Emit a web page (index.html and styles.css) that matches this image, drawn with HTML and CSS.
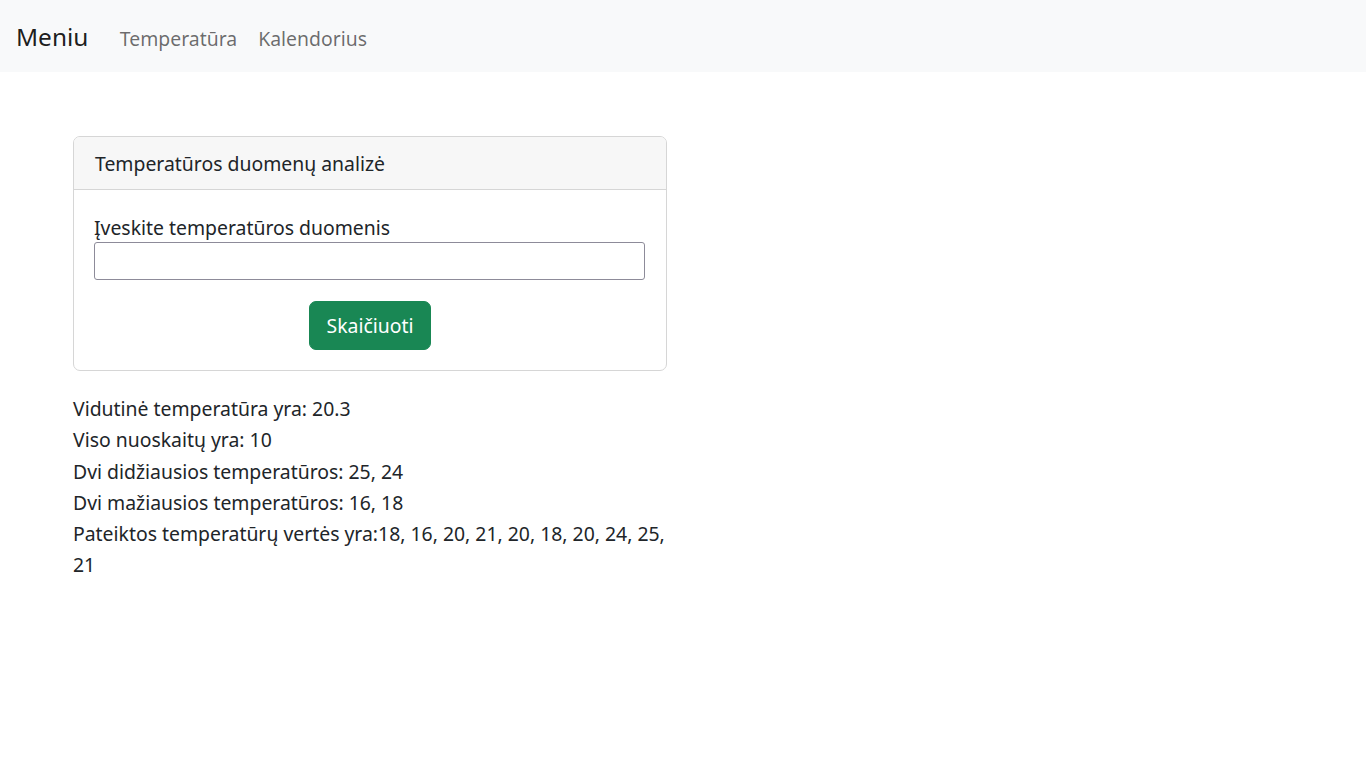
FILE: index.html
```html
<!DOCTYPE html>
<html lang="lt">
<head>
<meta charset="utf-8">
<title>Temperatūra</title>
<link rel="stylesheet" href="styles.css">
</head>
<body>
<nav class="navbar">
  <a class="brand" href="#">Meniu</a>
  <ul class="nav">
    <li><a class="nav-link" href="#">Temperatūra</a></li>
    <li><a class="nav-link" href="#">Kalendorius</a></li>
  </ul>
</nav>
<main class="main">
  <div class="card">
    <div class="card-header">Temperatūros duomenų analizė</div>
    <div class="card-body">
      <label class="label" for="temp">Įveskite temperatūros duomenis</label>
      <input class="input" id="temp" type="text">
      <div class="actions">
        <button class="btn" type="button">Skaičiuoti</button>
      </div>
    </div>
  </div>
  <div class="results">
    <div>Vidutinė temperatūra yra: 20.3</div>
    <div>Viso nuoskaitų yra: 10</div>
    <div>Dvi didžiausios temperatūros: 25, 24</div>
    <div>Dvi mažiausios temperatūros: 16, 18</div>
    <div>Pateiktos temperatūrų vertės yra:18, 16, 20, 21, 20, 18, 20, 24, 25, 21</div>
  </div>
</main>
</body>
</html>
```

FILE: styles.css
```css
* { box-sizing: border-box; }
html, body { margin: 0; padding: 0; }
body {
  font-family: "Noto Sans", "Open Sans", sans-serif;
  font-size: 19.4px;
  line-height: 30px;
  color: #212529;
  background: #fff;
}
.navbar {
  display: flex;
  align-items: center;
  height: 72px;
  padding: 0 16px;
  background: #f8f9fa;
}
.brand {
  font-size: 24.4px;
  line-height: 36px;
  color: rgba(0,0,0,.9);
  text-decoration: none;
  margin: 2px 21px 0 0;
}
.nav {
  display: flex;
  list-style: none;
  margin: 6px 0 0 0;
  padding: 0;
}
.nav-link {
  display: block;
  padding: 10px 10.5px;
  color: rgba(0,0,0,.58);
  text-decoration: none;
}
.main {
  padding: 64px 0 0 73px;
}
.card {
  width: 594px;
  border: 1px solid #d6d6d6;
  border-radius: 7px;
  overflow: hidden;
}
.card-header {
  background: #f7f7f7;
  border-bottom: 1px solid #d6d6d6;
  padding: 12px 20px 10px 21px;
  line-height: 30px;
}
.card-body {
  padding: 21px 20px 20px 20px;
}
.label {
  display: block;
  line-height: 30px;
  margin-top: 2px;
}
.input {
  display: block;
  width: 551px;
  height: 38px;
  margin: -1px 0 0 0;
  border: 1px solid #8d8b99;
  border-radius: 3px;
  font: inherit;
  padding: 0 6px;
}
.actions {
  display: flex;
  justify-content: center;
  margin-top: 21px;
}
.btn {
  font: inherit;
  line-height: 29px;
  padding: 9px 17px;
  color: #fff;
  background: #198754;
  border: 1px solid #198754;
  border-radius: 7px;
}
.results {
  width: 598px;
  margin-top: 22px;
  line-height: 31.25px;
}
```
